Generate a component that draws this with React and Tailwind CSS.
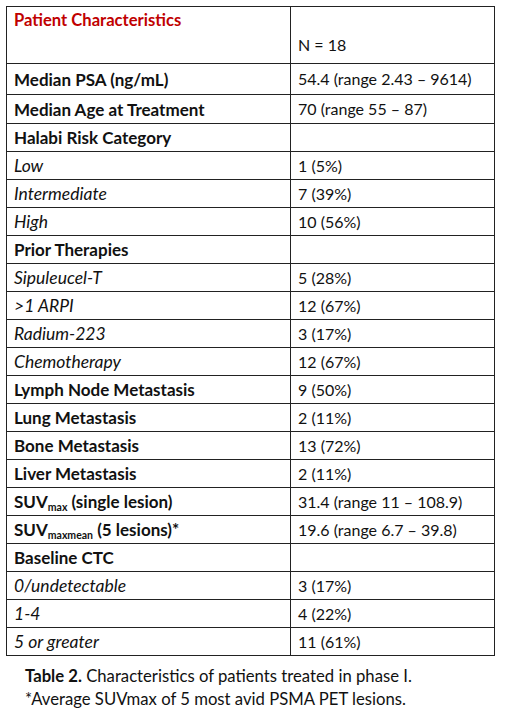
const rows = [
  { label: 'Median PSA (ng/mL)', value: '54.4 (range 2.43 – 9614)', kind: 'bold', h: 'h-[31px]' },
  { label: 'Median Age at Treatment', value: '70 (range 55 – 87)', kind: 'bold', h: 'h-[29px]' },
  { label: 'Halabi Risk Category', value: '', kind: 'bold' },
  { label: 'Low', value: '1 (5%)', kind: 'italic' },
  { label: 'Intermediate', value: '7 (39%)', kind: 'italic' },
  { label: 'High', value: '10 (56%)', kind: 'italic' },
  { label: 'Prior Therapies', value: '', kind: 'bold' },
  { label: 'Sipuleucel-T', value: '5 (28%)', kind: 'italic' },
  { label: '>1 ARPI', value: '12 (67%)', kind: 'italic' },
  { label: 'Radium-223', value: '3 (17%)', kind: 'italic' },
  { label: 'Chemotherapy', value: '12 (67%)', kind: 'italic' },
  { label: 'Lymph Node Metastasis', value: '9 (50%)', kind: 'bold' },
  { label: 'Lung Metastasis', value: '2 (11%)', kind: 'bold' },
  { label: 'Bone Metastasis', value: '13 (72%)', kind: 'bold' },
  { label: 'Liver Metastasis', value: '2 (11%)', kind: 'bold' },
  { label: <>SUV<span className="text-[10.5px] relative top-[3px]">max</span> (single lesion)</>, value: '31.4 (range 11 – 108.9)', kind: 'bold' },
  { label: <>SUV<span className="text-[10.5px] relative top-[3px]">maxmean</span> (5 lesions)*</>, value: '19.6 (range 6.7 – 39.8)', kind: 'bold' },
  { label: 'Baseline CTC', value: '', kind: 'bold' },
  { label: '0/undetectable', value: '3 (17%)', kind: 'italic' },
  { label: '1-4', value: '4 (22%)', kind: 'italic' },
  { label: '5 or greater', value: '11 (61%)', kind: 'italic' },
];

export default function App() {
  return (
    <div className="w-[514px] h-[714px] bg-white text-[#111] overflow-hidden" style={{ fontFamily: 'Lato, "Open Sans", sans-serif' }}>
      <div className="pt-[6px] pl-[6px]">
        <table className="border-collapse text-[16px] leading-none">
          <colgroup>
            <col className="w-[284px]" />
            <col className="w-[204px]" />
          </colgroup>
          <tbody>
            <tr className="h-[57px]">
              <td className="border-[1.5px] border-[#222] px-[7px] align-top pt-[5px] text-[16.6px] font-bold text-[#c00000]">Patient Characteristics</td>
              <td className="border-[1.5px] border-[#222] px-[7px] align-top pt-[30px]">N = 18</td>
            </tr>
            {rows.map((r, i) => (
              <tr key={i} className={r.h || 'h-[28px]'}>
                <td className={`border-[1.5px] border-[#222] px-[7px] ${r.kind === 'bold' ? 'font-bold text-[17px]' : 'italic text-[17.5px]'}`}>{r.label}</td>
                <td className="border-[1.5px] border-[#222] px-[7px]">{r.value}</td>
              </tr>
            ))}
          </tbody>
        </table>
      </div>
      <div className="pl-[25px] pt-[9px] text-[16.7px] leading-[23px]">
        <p><span className="font-bold">Table 2.</span> Characteristics of patients treated in phase I.</p>
        <p>*Average SUVmax of 5 most avid PSMA PET lesions.</p>
      </div>
    </div>
  );
}
